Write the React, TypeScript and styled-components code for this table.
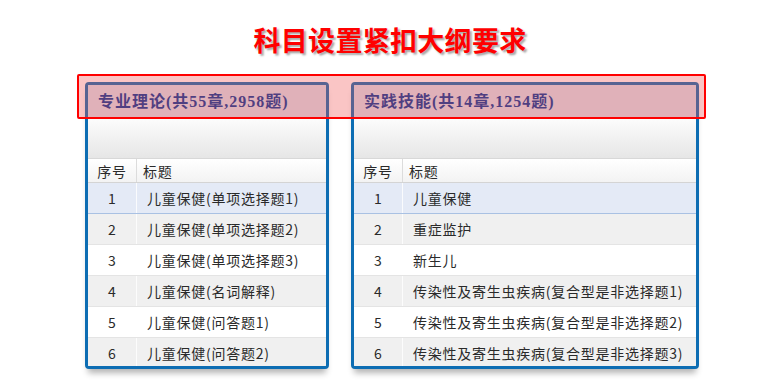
import styled, { createGlobalStyle } from 'styled-components';

const GlobalStyle = createGlobalStyle`
  html, body {
    margin: 0;
    padding: 0;
    background: #fff;
  }
  body {
    font-family: "Noto Sans CJK SC", "Noto Sans", sans-serif;
    color: #333;
  }
`;

type Subject = {
  title: string;
  width: number;
  items: string[];
};

const subjects: Subject[] = [
  {
    title: '专业理论(共55章,2958题)',
    width: 244,
    items: [
      '儿童保健(单项选择题1)',
      '儿童保健(单项选择题2)',
      '儿童保健(单项选择题3)',
      '儿童保健(名词解释)',
      '儿童保健(问答题1)',
      '儿童保健(问答题2)',
    ],
  },
  {
    title: '实践技能(共14章,1254题)',
    width: 348,
    items: [
      '儿童保健',
      '重症监护',
      '新生儿',
      '传染性及寄生虫疾病(复合型是非选择题1)',
      '传染性及寄生虫疾病(复合型是非选择题2)',
      '传染性及寄生虫疾病(复合型是非选择题3)',
    ],
  },
];

export default function App() {
  return (
    <>
      <GlobalStyle />
      <Page>
        <Heading>科目设置紧扣大纲要求</Heading>
        <Panels>
          {subjects.map((s) => (
            <Panel key={s.title} $width={s.width}>
              <PanelHeader>{s.title}</PanelHeader>
              <Toolbar />
              <HeadRow>
                <NumCell $head>序号</NumCell>
                <TitleCell $head>标题</TitleCell>
              </HeadRow>
              {s.items.map((item, i) => (
                <Row key={item} $index={i}>
                  <NumCell>{i + 1}</NumCell>
                  <TitleCell>{item}</TitleCell>
                </Row>
              ))}
            </Panel>
          ))}
          <Highlight />
        </Panels>
      </Page>
    </>
  );
}

const Page = styled.div`
  width: 780px;
  height: 390px;
  overflow: hidden;
  display: flex;
  flex-direction: column;
`;

const Heading = styled.h1`
  margin: 0;
  height: 82px;
  padding-top: 20px;
  box-sizing: border-box;
  text-align: center;
  font-size: 27px;
  line-height: 40px;
  font-weight: bold;
  color: #ff0000;
  text-shadow: 2px 2px 2px rgba(0, 0, 0, 0.35);
  letter-spacing: 0.3px;
`;

const Panels = styled.div`
  position: relative;
  display: flex;
  gap: 22px;
  padding-left: 85px;
`;

// red frame laid over the two panel headers
const Highlight = styled.div`
  position: absolute;
  left: 77px;
  top: -8px;
  width: 629px;
  height: 45px;
  box-sizing: border-box;
  border: 2px solid #ff0000;
  border-radius: 2px;
  background: rgba(240, 80, 80, 0.33);
  pointer-events: none;
`;

const Panel = styled.div<{ $width: number }>`
  width: ${(p) => p.$width}px;
  height: 287px;
  box-sizing: border-box;
  border: 3px solid #0d6db3;
  border-radius: 4px;
  overflow: hidden;
  background: #fff;
  box-shadow: 0 7px 6px -3px rgba(0, 0, 0, 0.3);
`;

const PanelHeader = styled.div`
  height: 34px;
  line-height: 34px;
  padding-left: 10px;
  background: #d8e2ee;
  color: #00389a;
  font-family: "Liberation Serif", "Noto Sans CJK SC", serif;
  font-size: 16px;
  font-weight: bold;
  letter-spacing: 1px;
  white-space: nowrap;
`;

const Toolbar = styled.div`
  height: 39px;
  background: linear-gradient(#fcfcfc, #e6e6e6);
`;

const HeadRow = styled.div`
  display: flex;
  height: 25px;
  box-sizing: border-box;
  background: linear-gradient(#ffffff, #f3f3f3);
  border-top: 1px solid #d8d8d8;
  border-bottom: 1px solid #d4d4d4;
`;

const rowBg = ['#e4eaf6', '#f0f0f0', '#ffffff', '#f0f0f0', '#ffffff', '#f0f0f0'];

const Row = styled.div<{ $index: number }>`
  display: flex;
  height: 31px;
  box-sizing: border-box;
  flex-shrink: 0;
  background: ${(p) => rowBg[p.$index]};
  border-bottom: 1px solid ${(p) => (p.$index === 0 ? '#a9c1e3' : '#e4e4e4')};
`;

const NumCell = styled.div<{ $head?: boolean }>`
  width: 49px;
  flex-shrink: 0;
  box-sizing: border-box;
  border-right: 1px solid ${(p) => (p.$head ? '#dcdcdc' : 'rgba(255,255,255,0.8)')};
  display: flex;
  align-items: center;
  justify-content: center;
  font-size: 14px;
  color: #2a2a2a;
  letter-spacing: ${(p) => (p.$head ? '0.7px' : '0')};
`;

const TitleCell = styled.div<{ $head?: boolean }>`
  flex: 1;
  display: flex;
  align-items: center;
  padding-left: ${(p) => (p.$head ? '6px' : '10px')};
  font-size: 14px;
  letter-spacing: 0.75px;
  color: #2a2a2a;
  white-space: nowrap;
`;
